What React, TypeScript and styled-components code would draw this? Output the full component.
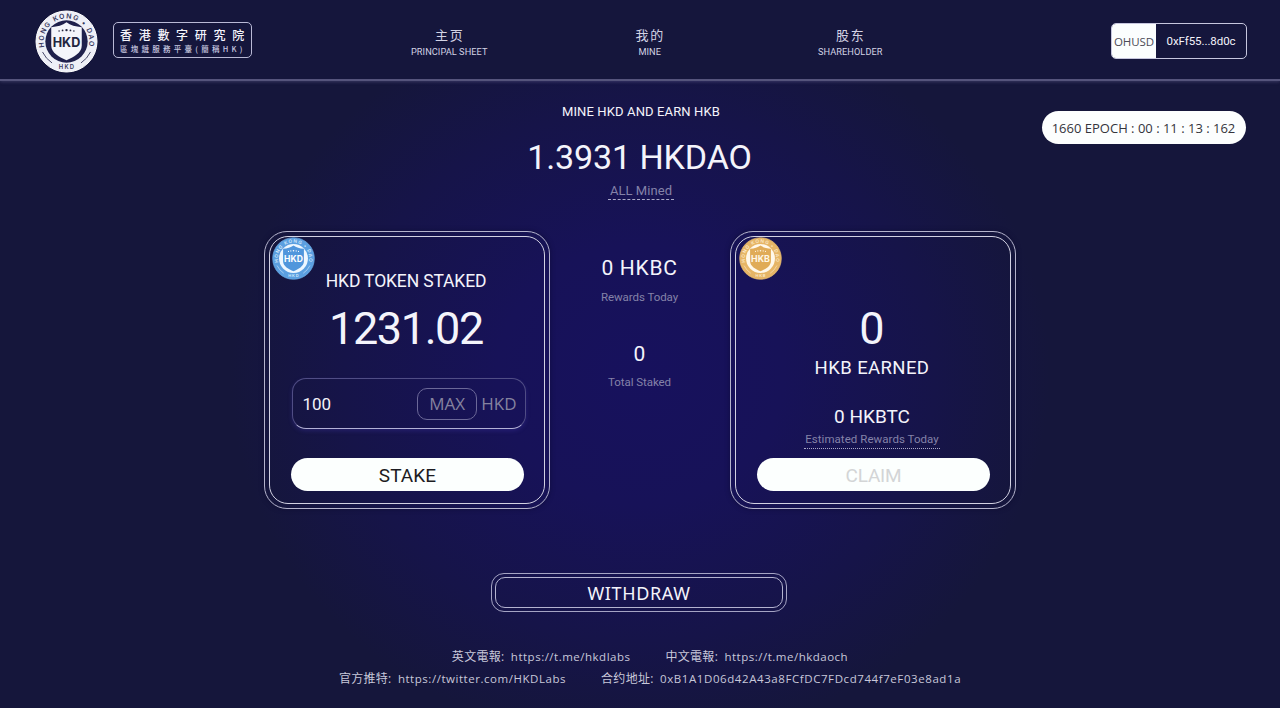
import React from "react";
import styled, { createGlobalStyle, css } from "styled-components";

const GlobalStyle = createGlobalStyle`
  *, *::before, *::after { box-sizing: border-box; }
  body {
    margin: 0;
    background: #15163b;
    color: #f4f4fb;
    font-family: "Open Sans", "Noto Sans CJK SC", sans-serif;
  }
  button, input { font: inherit; color: inherit; border: 0; background: none; padding: 0; margin: 0; outline: 0; }
`;

const Page = styled.div`
  width: 1280px;
  height: 708px;
  overflow: hidden;
  display: flex;
  flex-direction: column;
  background:
    radial-gradient(ellipse 410px 370px at 640px 375px, #17115d 0%, #171258 35%, #161449 72%, rgba(21, 22, 59, 0) 100%),
    #15163b;
`;

const Header = styled.header`
  flex: none;
  height: 81px;
  padding: 10px 33px 0 35px;
  display: flex;
  align-items: flex-start;
  background: #15163c;
  border-bottom: 2px solid #55547c;
  box-shadow: 0 1px 3px rgba(120, 118, 170, 0.35);
`;

const Emblem = styled.svg`
  flex: none;
  display: block;
`;

const BrandName = styled.div`
  width: 139px;
  height: 36px;
  margin: 12px 0 0 15px;
  padding: 4px 0 0 6px;
  border: 1.5px solid #b9b9d6;
  border-radius: 5px;
  white-space: nowrap;
  overflow: hidden;
`;

const BrandTitle = styled.div`
  font: 500 12px/16px "Noto Sans CJK TC", sans-serif;
  letter-spacing: 6.7px;
`;

const BrandNote = styled.div`
  margin-top: 1px;
  font: 500 7.5px/10px "Noto Sans CJK TC", sans-serif;
  letter-spacing: 3.25px;
  color: #c9c9e0;
`;

const Nav = styled.nav`
  display: flex;
  margin: 15px auto 0 97px;
`;

const NavItem = styled.a`
  width: 200.5px;
  display: flex;
  flex-direction: column;
  align-items: center;
  color: #d3d3e4;
`;

const NavTitle = styled.span`
  font-size: 13px;
  line-height: 20px;
  letter-spacing: 1.8px;
  margin-right: -1px;
`;

const NavNote = styled.span`
  font-family: Roboto, sans-serif;
  font-size: 9.2px;
  line-height: 13px;
  letter-spacing: 0.08px;
`;

const Wallet = styled.div`
  display: flex;
  width: 136px;
  height: 36px;
  margin-top: 13px;
  border: 1.5px solid #c6c6de;
  border-radius: 5px;
  overflow: hidden;
  font-size: 11.5px;
  line-height: 35px;
  text-align: center;
`;

const WalletToken = styled.span`
  width: 44px;
  background: #fbfefe;
  color: #4b4b57;
  letter-spacing: -0.1px;
`;

const WalletAddress = styled.span`
  flex: 1;
  font-family: Roboto, sans-serif;
  letter-spacing: -0.08px;
`;

const Hero = styled.section`
  flex: none;
  display: grid;
  grid-template-columns: 1fr 300px 1fr;
  height: 150px;
  padding: 20px 34px 0;
`;

const HeroText = styled.div`
  grid-column: 2;
  display: flex;
  flex-direction: column;
  align-items: center;
  margin-right: -2px;
`;

const EpochPill = styled.div`
  justify-self: end;
  width: 204px;
  height: 33px;
  margin-top: 10px;
  padding-right: 1px;
  border-radius: 17px;
  background: #fcfefe;
  color: #34343c;
  font-size: 13px;
  line-height: 34px;
  text-align: center;
  white-space: nowrap;
`;

interface LineProps {
  $size: number;
  $height: number;
  $spacing?: number;
  $muted?: boolean;
}

const Line = styled.div<LineProps>`
  font-family: Roboto, sans-serif;
  font-size: ${(p) => p.$size}px;
  line-height: ${(p) => p.$height}px;
  letter-spacing: ${(p) => p.$spacing ?? 0}px;
  white-space: nowrap;
  ${(p) => p.$muted && css`color: #8482a8;`}
`;

const Headline = styled(Line)`
  margin-right: 3px;
`;

const Hint = styled(Line)<{ $line: "dashed" | "dotted"; $pad: number }>`
  padding: 0 ${(p) => p.$pad}px;
  border-bottom: 1px ${(p) => p.$line} #aaa9c8;
`;

const Board = styled.main`
  flex: none;
  display: flex;
  justify-content: center;
  height: 278px;
`;

const Card = styled.section`
  width: 286px;
  height: 278px;
  padding: 4px;
  border: 1px solid #b4b3cc;
  border-radius: 23px;
  box-shadow: 0 0 5px rgba(10, 8, 40, 0.5);
`;

const CardBody = styled.div`
  position: relative;
  height: 100%;
  display: flex;
  flex-direction: column;
  align-items: center;
  padding-right: 2px;
  border: 1px solid #d2d1e2;
  border-radius: 19px;
`;

const TokenBadge = styled.div<{ $left: number }>`
  position: absolute;
  left: ${(p) => p.$left}px;
  top: 0;
`;

const Spacer = styled.div<{ $h: number }>`
  flex: none;
  height: ${(p) => p.$h}px;
`;

const AmountField = styled.div`
  flex: none;
  width: 234px;
  height: 51px;
  margin-left: 5px;
  padding: 0 8px 0 10px;
  display: flex;
  align-items: center;
  border: 1px solid #504d85;
  border-bottom-color: #b3b1d6;
  border-radius: 14px;
  box-shadow: 0 2px 4px rgba(70, 60, 180, 0.3);
  font-size: 17px;
  color: #85829f;
`;

const AmountInput = styled.input`
  flex: 1;
  min-width: 0;
  color: #f2f2f8;
  font-family: Roboto, sans-serif;
  font-size: 17px;
`;

const MaxButton = styled.button`
  width: 60px;
  height: 32px;
  margin-right: 4px;
  padding-bottom: 1px;
  border: 1px solid #6b6898;
  border-radius: 10px;
`;

const PillButton = styled.button<{ $idle?: boolean }>`
  flex: none;
  width: 233px;
  height: 33px;
  margin-left: 2px;
  padding: 2px 0 0 1px;
  border-radius: 17px;
  background: #fcfffe;
  color: ${(p) => (p.$idle ? "#d3d5d6" : "#1c1c22")};
  font-family: Roboto, sans-serif;
  font-size: 19px;
  letter-spacing: ${(p) => (p.$idle ? -0.2 : 0.1)}px;
  line-height: 31px;
`;

const Totals = styled.section`
  width: 180px;
  display: flex;
  flex-direction: column;
  align-items: center;
  padding: 23px 1px 0 0;
`;

const Withdraw = styled.button`
  flex: none;
  align-self: center;
  display: block;
  width: 296px;
  height: 39px;
  margin-top: 64px;
  margin-right: 2px;
  padding: 3px;
  border: 1px solid #a5a4c4;
  border-radius: 13px;
`;

const WithdrawLabel = styled.span`
  display: block;
  height: 31px;
  border: 1px solid #b4b3d0;
  border-radius: 10px;
  font-family: "Noto Sans", sans-serif;
  font-size: 18px;
  line-height: 30px;
  letter-spacing: 0.65px;
`;

const Footer = styled.footer`
  flex: none;
  margin-top: 34px;
  padding-left: 20px;
  display: flex;
  flex-direction: column;
  align-items: center;
  color: #c8c8da;
`;

const FooterRow = styled.div`
  display: flex;
  gap: 35px;
  height: 22px;
  align-items: center;
`;

const FooterItem = styled.div<{ $spacing: number }>`
  display: flex;
  font-size: 11.5px;
  line-height: 22px;
  letter-spacing: ${(p) => p.$spacing}px;
  white-space: nowrap;
`;

const FooterLabel = styled.span`
  width: 59px;
  font-size: 12px;
  letter-spacing: 0.3px;
`;

interface SealProps {
  id: string;
  size: number;
  label: string;
  ring: string;
  ink: string;
  edge: string;
  gap: string;
  shield: string;
  shieldInk: string;
}

function Seal({ id, size, label, ring, ink, edge, gap, shield, shieldInk }: SealProps) {
  return (
    <Emblem width={size} height={size} viewBox="0 0 64 64">
      <defs>
        <path id={`${id}-top`} d="M9.4 37 A23.2 23.2 0 1 1 54.6 37" />
      </defs>
      <circle cx="32" cy="32" r="31" fill={ring} stroke={edge} strokeWidth="1" />
      <circle cx="32" cy="32" r="21.5" fill={gap} />
      <path
        d="M32 12.5 C36 15.5 41 17 47.5 17.5 V36 C47.5 43.5 39 48 32 51 C25 48 16.5 43.5 16.5 36 V17.5 C23 17 28 15.5 32 12.5 Z"
        fill={shield}
      />
      <g fill={shieldInk}>
        <circle cx="24.5" cy="21.4" r="0.8" />
        <circle cx="28" cy="20.8" r="0.9" />
        <circle cx="32" cy="20.4" r="1.2" />
        <circle cx="36" cy="20.8" r="0.9" />
        <circle cx="39.5" cy="21.4" r="0.8" />
      </g>
      <text x="32" y="37.8" textAnchor="middle" textLength="28" lengthAdjust="spacingAndGlyphs" fontFamily="Inter, sans-serif" fontWeight="700" fontSize="13" fill={shieldInk}>
        {label}
      </text>
      <g fill={ink} fontFamily="Inter, sans-serif" fontWeight="600" fontSize="7">
        <text letterSpacing="1.3">
          <textPath href={`#${id}-top`} startOffset="50%" textAnchor="middle">HONG KONG • DAO</textPath>
        </text>
        <text x="32.5" y="60.2" textAnchor="middle" fontSize="6" letterSpacing="1.2">{label}</text>
      </g>
      <g fill="none" stroke={ink} strokeWidth="0.9" strokeLinecap="round">
        <path d="M7.8 43 A26.6 26.6 0 0 0 17 53.6" />
        <path d="M56.2 43 A26.6 26.6 0 0 1 47 53.6" />
      </g>
    </Emblem>
  );
}

const NAV = [
  { title: "主页", note: "PRINCIPAL SHEET" },
  { title: "我的", note: "MINE" },
  { title: "股东", note: "SHAREHOLDER" },
];

const LINKS = [
  [
    { label: "英文電報:", value: "https://t.me/hkdlabs", spacing: 0.5 },
    { label: "中文電報:", value: "https://t.me/hkdaoch", spacing: 0.5 },
  ],
  [
    { label: "官方推特:", value: "https://twitter.com/HKDLabs", spacing: 0.54 },
    { label: "合约地址:", value: "0xB1A1D06d42A43a8FCfDC7FDcd744f7eF03e8ad1a", spacing: 0.58 },
  ],
];

export default function App() {
  return (
    <Page>
      <GlobalStyle />
      <Header>
        <Seal id="brand" size={63} label="HKD" ring="#eeeff7" ink="#34355a" edge="#ffffff" gap="#1f204c" shield="#f4f5fb" shieldInk="#23253f" />
        <BrandName>
          <BrandTitle>香港數字研究院</BrandTitle>
          <BrandNote>區塊鏈服務平臺(簡稱HK)</BrandNote>
        </BrandName>
        <Nav>
          {NAV.map((item) => (
            <NavItem key={item.note}>
              <NavTitle>{item.title}</NavTitle>
              <NavNote>{item.note}</NavNote>
            </NavItem>
          ))}
        </Nav>
        <Wallet>
          <WalletToken>OHUSD</WalletToken>
          <WalletAddress>0xFf55...8d0c</WalletAddress>
        </Wallet>
      </Header>

      <Hero>
        <HeroText>
          <Line $size={13} $height={21} $spacing={0.13}>MINE HKD AND EARN HKB</Line>
          <Spacer $h={12} />
          <Headline $size={34} $height={46} $spacing={-0.1}>1.3931 HKDAO</Headline>
          <Spacer $h={3} />
          <Hint $size={13} $height={16} $spacing={0.05} $muted $line="dashed" $pad={1.5}>ALL Mined</Hint>
        </HeroText>
        <EpochPill>1660 EPOCH : 00 : 11 : 13 : 162</EpochPill>
      </Hero>

      <Board>
        <Card>
          <CardBody>
            <TokenBadge $left={1.5}>
              <Seal id="hkd" size={43} label="HKD" ring="#5b9fe0" ink="#d5e9fb" edge="#6cace6" gap="#eef7ff" shield="#5096dc" shieldInk="#ffffff" />
            </TokenBadge>
            <Spacer $h={32} />
            <Line $size={17.5} $height={24} $spacing={-0.15}>HKD TOKEN STAKED</Line>
            <Spacer $h={10} />
            <Line $size={45} $height={52} $spacing={-1.4}>1231.02</Line>
            <Spacer $h={23} />
            <AmountField>
              <AmountInput defaultValue="100" />
              <MaxButton>MAX</MaxButton>
              HKD
            </AmountField>
            <Spacer $h={29} />
            <PillButton>STAKE</PillButton>
          </CardBody>
        </Card>
        <Totals>
          <Line $size={21} $height={28} $spacing={0.7}>0 HKBC</Line>
          <Spacer $h={7} />
          <Line $size={11.5} $height={16} $spacing={-0.05} $muted>Rewards Today</Line>
          <Spacer $h={35} />
          <Line $size={21} $height={28}>0</Line>
          <Spacer $h={6} />
          <Line $size={11.5} $height={16} $spacing={-0.05} $muted>Total Staked</Line>
        </Totals>
        <Card>
          <CardBody>
            <TokenBadge $left={3}>
              <Seal id="hkb" size={43} label="HKB" ring="#e6b566" ink="#fbe9c8" edge="#e9bd75" gap="#fff8ea" shield="#e0ab57" shieldInk="#fff7e6" />
            </TokenBadge>
            <Spacer $h={66} />
            <Line $size={45} $height={52}>0</Line>
            <Line $size={18.5} $height={26} $spacing={0.4}>HKB EARNED</Line>
            <Spacer $h={23} />
            <Line $size={19} $height={26}>0 HKBTC</Line>
            <Hint $size={11.5} $height={18} $spacing={0.05} $muted $line="dotted" $pad={1.5}>Estimated Rewards Today</Hint>
            <Spacer $h={9} />
            <PillButton $idle>CLAIM</PillButton>
          </CardBody>
        </Card>
      </Board>

      <Withdraw>
        <WithdrawLabel>WITHDRAW</WithdrawLabel>
      </Withdraw>

      <Footer>
        {LINKS.map((row, i) => (
          <FooterRow key={i}>
            {row.map((item) => (
              <FooterItem key={item.value} $spacing={item.spacing}>
                <FooterLabel>{item.label}</FooterLabel>
                {item.value}
              </FooterItem>
            ))}
          </FooterRow>
        ))}
      </Footer>
    </Page>
  );
}
